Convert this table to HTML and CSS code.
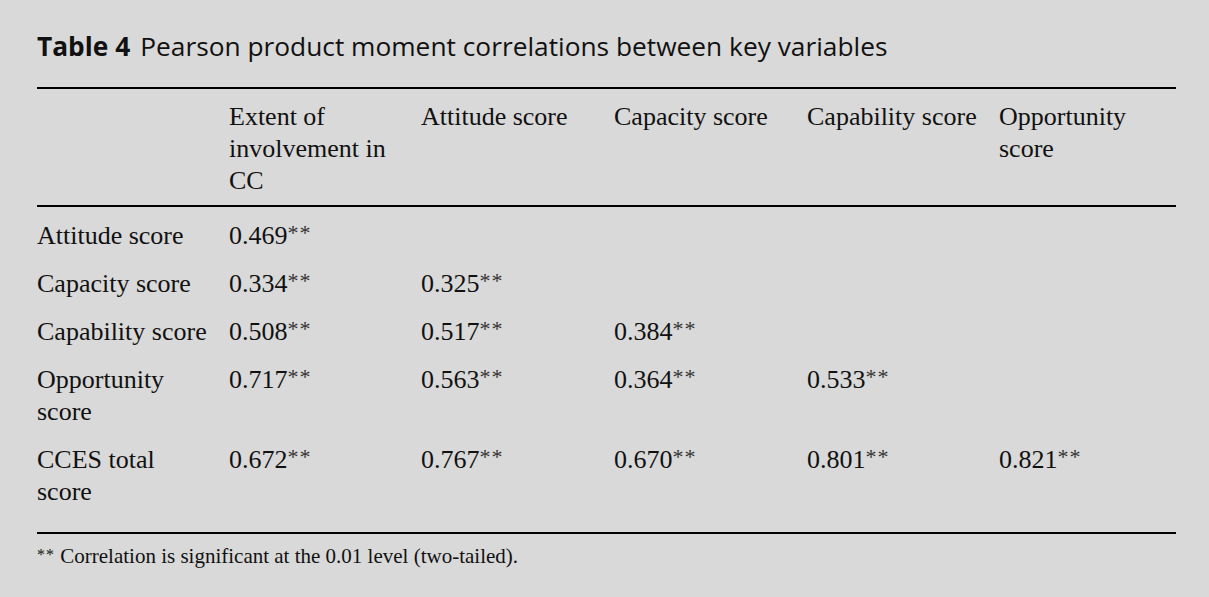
FILE: index.html
```html
<!DOCTYPE html>
<html>
<head>
<meta charset="utf-8">
<link rel="stylesheet" href="styles.css">
</head>
<body>
<div class="page">
  <h1 class="caption"><span class="label">Table 4</span>Pearson product moment correlations between key variables</h1>
  <table class="corr">
    <colgroup>
      <col class="c0"><col class="c1"><col class="c2"><col class="c3"><col class="c4"><col class="c5">
    </colgroup>
    <thead>
      <tr>
        <th></th>
        <th>Extent of involvement in CC</th>
        <th>Attitude score</th>
        <th>Capacity score</th>
        <th>Capability score</th>
        <th>Opportunity score</th>
      </tr>
    </thead>
    <tbody>
      <tr>
        <td>Attitude score</td>
        <td>0.469<sup>**</sup></td>
        <td></td><td></td><td></td><td></td>
      </tr>
      <tr>
        <td>Capacity score</td>
        <td>0.334<sup>**</sup></td>
        <td>0.325<sup>**</sup></td>
        <td></td><td></td><td></td>
      </tr>
      <tr>
        <td>Capability score</td>
        <td>0.508<sup>**</sup></td>
        <td>0.517<sup>**</sup></td>
        <td>0.384<sup>**</sup></td>
        <td></td><td></td>
      </tr>
      <tr>
        <td>Opportunity score</td>
        <td>0.717<sup>**</sup></td>
        <td>0.563<sup>**</sup></td>
        <td>0.364<sup>**</sup></td>
        <td>0.533<sup>**</sup></td>
        <td></td>
      </tr>
      <tr>
        <td>CCES total score</td>
        <td>0.672<sup>**</sup></td>
        <td>0.767<sup>**</sup></td>
        <td>0.670<sup>**</sup></td>
        <td>0.801<sup>**</sup></td>
        <td>0.821<sup>**</sup></td>
      </tr>
    </tbody>
  </table>
  <p class="note"><sup>**</sup> Correlation is significant at the 0.01 level (two-tailed).</p>
</div>
</body>
</html>
```

FILE: styles.css
```css
html, body {
  margin: 0;
  padding: 0;
  background: #d9d9d9;
}

body {
  color: #111;
  font-family: "Liberation Serif", "Times New Roman", serif;
}

.page {
  padding: 30px 0 0 37px;
  width: 1139px;
}

.caption {
  margin: 0;
  font-family: "Open Sans", "Liberation Sans", sans-serif;
  font-weight: 400;
  font-size: 26.3px;
  line-height: 32px;
  color: #111;
  white-space: nowrap;
}

.caption .label {
  font-weight: 700;
  margin-right: 10px;
}

.corr {
  margin-top: 25px;
  width: 1139px;
  table-layout: fixed;
  border-collapse: collapse;
  font-size: 26px;
  line-height: 32px;
}

.c0, .c1 { width: 192px; }
.c2, .c3 { width: 193px; }
.c4 { width: 192px; }
.c5 { width: 177px; }

.corr th,
.corr td {
  text-align: left;
  vertical-align: top;
  font-weight: 400;
  padding: 8px 16px 8px 0;
}

.corr thead tr {
  border-top: 2px solid #000;
  border-bottom: 2px solid #000;
}

.corr thead th {
  padding-top: 12px;
  padding-bottom: 8px;
}

.corr tbody tr:first-child td {
  padding-top: 13px;
}

.corr tbody tr:last-child {
  border-bottom: 2px solid #000;
}

.corr tbody tr:last-child td {
  padding-bottom: 24px;
}

.corr sup {
  font-size: 22px;
  line-height: 0;
  vertical-align: 4px;
  letter-spacing: 1px;
  color: #333;
}

.note {
  margin: 10px 0 0 0;
  font-size: 21px;
  line-height: 24px;
}

.note sup {
  font-size: 16px;
  line-height: 0;
  vertical-align: 3px;
  letter-spacing: 1px;
}
```
